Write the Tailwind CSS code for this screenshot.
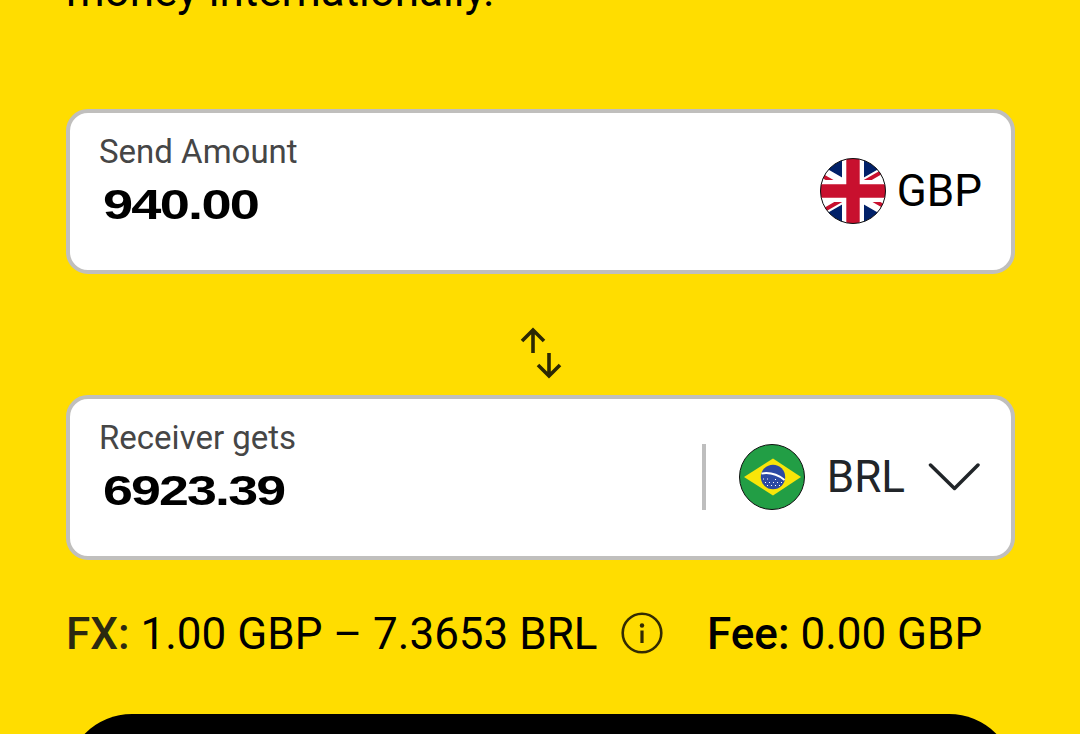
<!DOCTYPE html>
<html lang="en">
<head>
  <meta charset="UTF-8" />
  <meta name="viewport" content="width=device-width, initial-scale=1.0"/>
  <title>Send money</title>
  <script src="https://cdn.jsdelivr.net/npm/@tailwindcss/browser@4"></script>
</head>
<body class="bg-[#ffdd00] h-[734px] overflow-hidden font-['Roboto',sans-serif] text-black">
  <div class="w-[949px] ml-[66px]">
    <div class="h-[109px] overflow-hidden">
      <p class="-mt-[39px] text-[44px] leading-[60px] whitespace-nowrap">money internationally.</p>
    </div>

    <!-- Send amount -->
    <div class="h-[165px] flex justify-between bg-white border-4 border-[#c0bfbd] rounded-[22px] pl-[29px] pr-[29px]">
      <div class="pt-[19px]">
        <div class="text-[33px] leading-[40px] text-[#464646]">Send Amount</div>
        <div class="mt-[6px] ml-[4px] text-[43px] leading-[52px] font-bold font-['Liberation_Sans',sans-serif] tracking-[-1.4px] origin-left scale-x-[1.26] w-fit">940.00</div>
      </div>
      <div class="flex items-center h-[155px]">
        <svg class="w-[66px] h-[66px]" viewBox="0 0 66 66">
          <defs><clipPath id="gb"><circle cx="33" cy="33" r="32.5"/></clipPath></defs>
          <g clip-path="url(#gb)">
            <path fill="#012169" d="M0 0h66v66H0z"/>
            <path stroke="#fff" stroke-width="12.5" d="M-33 -5L99 71M99 -5L-33 71"/>
            <path stroke="#c8102e" stroke-width="4" d="M-33 -2.500L33 35.500M33 30.500L99 -7.500M33 30.500L99 68.500M-33 73.500L33 35.500"/>
            <path stroke="#fff" stroke-width="22" d="M33 0v66M0 33h66"/>
            <path stroke="#c8102e" stroke-width="13.4" d="M33 0v66M0 33h66"/>
          </g>
          <circle cx="33" cy="33" r="32.5" fill="none" stroke="#111"/>
        </svg>
        <span class="ml-[11px] text-[44px] leading-[52px]">GBP</span>
      </div>
    </div>

    <!-- Swap -->
    <div class="h-[121px] flex justify-center pt-[53px]">
      <svg class="w-[42px] h-[54px]" viewBox="0 0 42 54" fill="none" stroke="#2c2803" stroke-width="3.6">
        <path d="M13 26V3.500M2 14L13 3L24 14"/>
        <path d="M29 26V48.500M18 38L29 49L40 38"/>
      </svg>
    </div>

    <!-- Receiver gets -->
    <div class="h-[165px] flex justify-between bg-white border-4 border-[#c0bfbd] rounded-[22px] pl-[29px] pr-[31px]">
      <div class="pt-[19px]">
        <div class="text-[33px] leading-[40px] text-[#464646]">Receiver gets</div>
        <div class="mt-[6px] ml-[4px] text-[43px] leading-[52px] font-bold font-['Liberation_Sans',sans-serif] tracking-[-1.5px] origin-left scale-x-[1.25] w-fit">6923.39</div>
      </div>
      <div class="flex items-center h-[155px]">
        <div class="w-1 h-[66px] bg-[#bebebe]"></div>
        <svg class="ml-[33px] w-[66px] h-[66px]" viewBox="0 0 66 66">
          <circle cx="33" cy="33" r="32.500" fill="#229e45" stroke="#111"/>
          <path fill="#f8e509" d="M5 33L34 14.500L62 33L34 51.500Z"/>
          <circle cx="34" cy="33" r="12.200" fill="#2b49a3"/>
          <path fill="none" stroke="#fff" stroke-width="2" d="M22.500 29.500Q35 27.500 45.500 36"/>
          <path fill="none" stroke="#fff" stroke-width="1" stroke-dasharray="1 3" d="M24 35H31M26 38.500H43M28 41.500H41M36 35.500H40"/>
        </svg>
        <span class="ml-[22px] text-[44px] leading-[52px] text-[#212529]">BRL</span>
        <svg class="ml-[23px] w-[52px] h-[28px]" viewBox="0 0 52 28" fill="none" stroke="#212529" stroke-width="3.500" stroke-linecap="round" stroke-linejoin="round">
          <path d="M2.500 2L26.500 25.500L50 2"/>
        </svg>
      </div>
    </div>

    <!-- Rate and fee -->
    <div class="h-[154px] flex pt-[48px] text-[44px] leading-[52px] whitespace-nowrap">
      <div><b class="font-medium text-[#2c2a10]">FX:</b> 1.00 GBP – 7.3653 BRL</div>
      <svg class="ml-[23.5px] mt-[4px] w-[42px] h-[42px]" viewBox="0 0 42 42">
        <circle cx="21" cy="21" r="19.300" fill="none" stroke="#332b02" stroke-width="2.600"/>
        <circle cx="21" cy="13.500" r="2.200" fill="#332b02"/>
        <path stroke="#332b02" stroke-width="3.200" d="M21 18.500V31"/>
      </svg>
      <div class="ml-[44px]"><b class="font-medium">Fee:</b> 0.00 GBP</div>
    </div>

    <button class="block w-full h-[132px] bg-black rounded-full"></button>
  </div>
</body>
</html>
